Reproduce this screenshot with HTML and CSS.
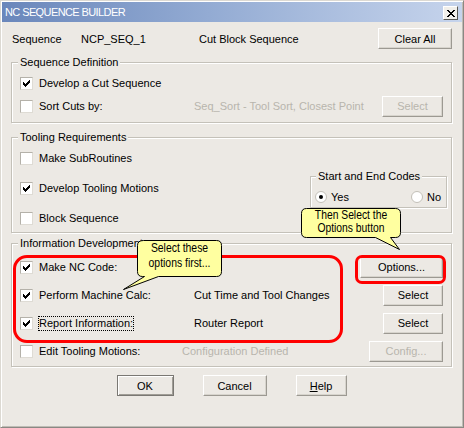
FILE: index.html
```html
<!DOCTYPE html>
<html>
<head>
<meta charset="utf-8">
<link rel="stylesheet" href="styles.css">
</head>
<body>
<div class="window">
  <div class="titlebar">
    <span class="title">NC SEQUENCE BUILDER</span>
    <span class="close"><svg width="8" height="7" viewBox="0 0 8 7"><path d="M0 0h2v1H0z M6 0h2v1H6z M1 1h2v1H1z M5 1h2v1H5z M2 2h4v1H2z M3 3h2v1H3z M2 4h4v1H2z M1 5h2v1H1z M5 5h2v1H5z M0 6h2v1H0z M6 6h2v1H6z" fill="#000"/></svg></span>
  </div>
  <div class="body">
    <div class="toprow">
      <span class="t-seq">Sequence</span>
      <span class="t-name">NCP_SEQ_1</span>
      <span class="t-desc">Cut Block Sequence</span>
      <span class="btn w-clear">Clear All</span>
    </div>

    <div class="group g-seq">
      <div class="legend">Sequence Definition</div>
      <div class="rows seq-rows">
        <div class="row">
          <span class="chk"><span class="cb"><svg width="7" height="7" viewBox="0 0 7 7"><path d="M0 2h1v3H0z M1 3h1v3H1z M2 4h1v3H2z M3 3h1v3H3z M4 2h1v3H4z M5 1h1v3H5z M6 0h1v3H6z" fill="#000"/></svg></span>Develop a Cut Sequence</span>
        </div>
        <div class="row">
          <span class="chk"><span class="cb"></span>Sort Cuts by:</span>
          <span class="desc disabled">Seq_Sort - Tool Sort, Closest Point</span>
          <span class="btn disabled w-sel1">Select</span>
        </div>
      </div>
    </div>

    <div class="group g-tool">
      <div class="legend">Tooling Requirements</div>
      <div class="tool-body">
        <div class="tool-left">
          <div class="row"><span class="chk"><span class="cb"></span>Make SubRoutines</span></div>
          <div class="row"><span class="chk"><span class="cb"><svg width="7" height="7" viewBox="0 0 7 7"><path d="M0 2h1v3H0z M1 3h1v3H1z M2 4h1v3H2z M3 3h1v3H3z M4 2h1v3H4z M5 1h1v3H5z M6 0h1v3H6z" fill="#000"/></svg></span>Develop Tooling Motions</span></div>
          <div class="row"><span class="chk"><span class="cb"></span>Block Sequence</span></div>
        </div>
        <div class="group subgroup">
          <div class="legend">Start and End Codes</div>
          <div class="radios">
            <span class="ropt"><span class="rb on"></span>Yes</span>
            <span class="ropt"><span class="rb"></span>No</span>
          </div>
        </div>
      </div>
    </div>

    <div class="group g-info">
      <div class="legend">Information Development</div>
      <div class="rows info-rows">
        <div class="row">
          <span class="chk"><span class="cb"><svg width="7" height="7" viewBox="0 0 7 7"><path d="M0 2h1v3H0z M1 3h1v3H1z M2 4h1v3H2z M3 3h1v3H3z M4 2h1v3H4z M5 1h1v3H5z M6 0h1v3H6z" fill="#000"/></svg></span>Make NC Code:</span>
          <span class="desc"></span>
          <span class="btn w-opt">Options...</span>
        </div>
        <div class="row">
          <span class="chk"><span class="cb"><svg width="7" height="7" viewBox="0 0 7 7"><path d="M0 2h1v3H0z M1 3h1v3H1z M2 4h1v3H2z M3 3h1v3H3z M4 2h1v3H4z M5 1h1v3H5z M6 0h1v3H6z" fill="#000"/></svg></span>Perform Machine Calc:</span>
          <span class="desc">Cut Time and Tool Changes</span>
          <span class="btn w-sel">Select</span>
        </div>
        <div class="row">
          <span class="chk"><span class="cb"><svg width="7" height="7" viewBox="0 0 7 7"><path d="M0 2h1v3H0z M1 3h1v3H1z M2 4h1v3H2z M3 3h1v3H3z M4 2h1v3H4z M5 1h1v3H5z M6 0h1v3H6z" fill="#000"/></svg></span><span class="focus">Report Information:</span></span>
          <span class="desc">Router Report</span>
          <span class="btn w-sel">Select</span>
        </div>
        <div class="row">
          <span class="chk chk-short"><span class="cb"></span>Edit Tooling Motions:</span>
          <span class="desc disabled">Configuration Defined</span>
          <span class="btn disabled w-cfg">Config...</span>
        </div>
      </div>
    </div>

    <div class="bottom">
      <span class="btn default w-ok">OK</span>
      <span class="btn w-cancel">Cancel</span>
      <span class="btn w-help"><u>H</u>elp</span>
    </div>
  </div>

  <div class="hl hl1"></div>
  <div class="hl hl2"></div>

  <div class="callout c1">
    <svg width="105" height="55" viewBox="0 0 105 55"><path d="M23.5 2.5 H96.5 Q101.5 2.5 101.5 7.5 V33.5 Q101.5 38.5 96.5 38.5 H38.5 L3.5 51.5 L24.5 38.5 H22.5 Q17.5 38.5 17.5 33.5 V7.5 Q17.5 2.5 23.5 2.5 Z" fill="#ffffa0" stroke="#000" stroke-width="1"/></svg>
    <div class="ctext">Select these<br>options first...</div>
  </div>

  <div class="callout c2">
    <svg width="110" height="48" viewBox="0 0 110 48"><path d="M10.5 3.5 H99.5 Q104.5 3.5 104.5 8.5 V27.5 Q104.5 32.5 99.5 32.5 H94.5 L103.5 44.5 L79.5 32.5 H10.5 Q5.5 32.5 5.5 27.5 V8.5 Q5.5 3.5 10.5 3.5 Z" fill="#ffffa0" stroke="#000" stroke-width="1"/></svg>
    <div class="ctext">Then Select the<br>Options button</div>
  </div>
</div>
</body>
</html>
```

FILE: styles.css
```css
:root {
  --bg: #ece9e4;
}
* { box-sizing: border-box; }
body {
  margin: 0;
  background: #fff;
  font: 11px "Liberation Sans", Arial, sans-serif;
  color: #000;
}
.window {
  position: relative;
  width: 464px;
  height: 428px;
  background: var(--bg);
  border: 1px solid;
  border-color: #dcd9d2 #8a8883 #8a8883 #dcd9d2;
  box-shadow: inset 1px 1px 0 #fff, inset -1px -1px 0 #bfbcb5;
}
.titlebar {
  height: 20px;
  margin: 1px 1px 0;
  padding-left: 3px;
  display: flex;
  justify-content: space-between;
  background: linear-gradient(90deg, #6a87bb 0%, #93abd3 45%, #c6d4ec 100%);
}
.title {
  color: #fff;
  font-size: 11px;
  letter-spacing: -0.6px;
  line-height: 20px;
}
.close {
  width: 15px;
  height: 14px;
  margin: 4px 4px 0 0;
  background: #f1efea;
  border: 1px solid;
  border-color: #fff #5a5955 #5a5955 #fff;
  display: flex;
  align-items: center;
  justify-content: center;
}
.close svg { display: block; }
.body {
  padding: 0 11px 0 10px;
}
.toprow {
  display: flex;
  align-items: center;
  height: 21px;
  margin-top: 6px;
  padding-left: 1px;
}
.t-seq { width: 69px; }
.t-name { width: 118px; }
.t-desc { flex: 1; }

.btn {
  flex: none;
  height: 21px;
  display: flex;
  align-items: center;
  justify-content: center;
  background: var(--bg);
  border: 1px solid;
  border-color: #fff #9c9992 #9c9992 #fff;
  box-shadow: inset -1px -1px 0 #d7d4cd;
  color: #000;
}
.btn.disabled { color: #b8b5ad; }
.btn.default {
  border-color: #7a7873;
  box-shadow: inset 1px 1px 0 #fff, inset -1px -1px 0 #a09d96;
}
.w-clear { width: 74px; }
.w-sel1 { width: 61px; }
.w-opt { width: 83px; }
.w-sel { width: 60px; }
.w-cfg { width: 74px; }
.w-ok { width: 57px; }
.w-cancel { width: 64px; }
.w-help { width: 51px; }

.group {
  border: 1px solid #c4c1b9;
  box-shadow: inset 1px 1px 0 #fff, 1px 1px 0 #fff;
}
.legend {
  width: max-content;
  margin: -7px 0 0 -2px;
  padding: 0 2px;
  line-height: 13px;
  background: var(--bg);
}
.row {
  display: flex;
  align-items: center;
  height: 22px;
}
.chk {
  flex: none;
  width: 174px;
  display: flex;
  align-items: center;
  gap: 6px;
}
.chk-short { width: 162px; }
.desc { flex: 1; }
.disabled { color: #b8b5ad; }
.cb {
  flex: none;
  width: 13px;
  height: 13px;
  background: #fff;
  border: 1px solid;
  border-color: #b4b1a9 #dedbd4 #dedbd4 #b4b1a9;
  display: flex;
  align-items: center;
  justify-content: center;
}
.cb svg { display: block; }
.focus {
  margin-left: -1px;
  padding: 1px 1px;
  line-height: 13px;
  outline: 1px dotted #000;
  outline-offset: -1px;
}

.g-seq {
  margin-top: 13px;
  padding: 0 8px 5px;
}
.seq-rows {
  margin-top: 3px;
  display: flex;
  flex-direction: column;
  gap: 1px;
}

.g-tool {
  margin-top: 14px;
  padding: 0 4px 3px 8px;
}
.tool-body {
  margin-top: 3px;
  display: flex;
  justify-content: space-between;
  align-items: flex-start;
}
.tool-left {
  display: flex;
  flex-direction: column;
  gap: 8px;
}
.subgroup {
  margin-top: 29px;
  width: 137px;
  padding: 0 5px 2px 4px;
}
.subgroup .legend { margin-left: 1px; }
.radios {
  margin-top: 6px;
  height: 16px;
  display: flex;
  align-items: center;
  justify-content: space-between;
}
.ropt {
  display: flex;
  align-items: center;
  gap: 4px;
}
.rb {
  width: 12px;
  height: 12px;
  border-radius: 50%;
  background: #fff;
  border: 1px solid #c3c0b8;
  display: flex;
  align-items: center;
  justify-content: center;
}
.rb.on::after {
  content: "";
  width: 4px;
  height: 4px;
  border-radius: 50%;
  background: #000;
}

.g-info {
  margin-top: 10px;
  padding: 0 8px 4px;
}
.info-rows {
  margin-top: 6px;
  display: flex;
  flex-direction: column;
  gap: 6px;
}

.bottom {
  margin-top: 8px;
  display: flex;
  justify-content: center;
  gap: 29px;
}

.hl {
  position: absolute;
  border: 3px solid #ff0000;
}
.hl1 {
  left: 12px;
  top: 254px;
  width: 330px;
  height: 88px;
  border-radius: 14px;
}
.hl2 {
  left: 354px;
  top: 254px;
  width: 91px;
  height: 29px;
  border-radius: 7px;
}

.callout {
  position: absolute;
}
.callout svg {
  position: absolute;
  left: 0;
  top: 0;
}
.ctext {
  position: relative;
  text-align: center;
  color: #000;
}
.c1 {
  left: 119px;
  top: 237px;
  width: 105px;
  height: 55px;
}
.c1 .ctext {
  margin: 2px 0 0 17px;
  width: 85px;
  font-size: 13px;
  line-height: 15px;
  transform: scaleX(0.8);
}
.c2 {
  left: 295px;
  top: 204px;
  width: 110px;
  height: 48px;
}
.c2 .ctext {
  margin: 4px 0 0 5px;
  width: 100px;
  font-size: 12px;
  line-height: 13px;
  transform: scaleX(0.86);
}
```
